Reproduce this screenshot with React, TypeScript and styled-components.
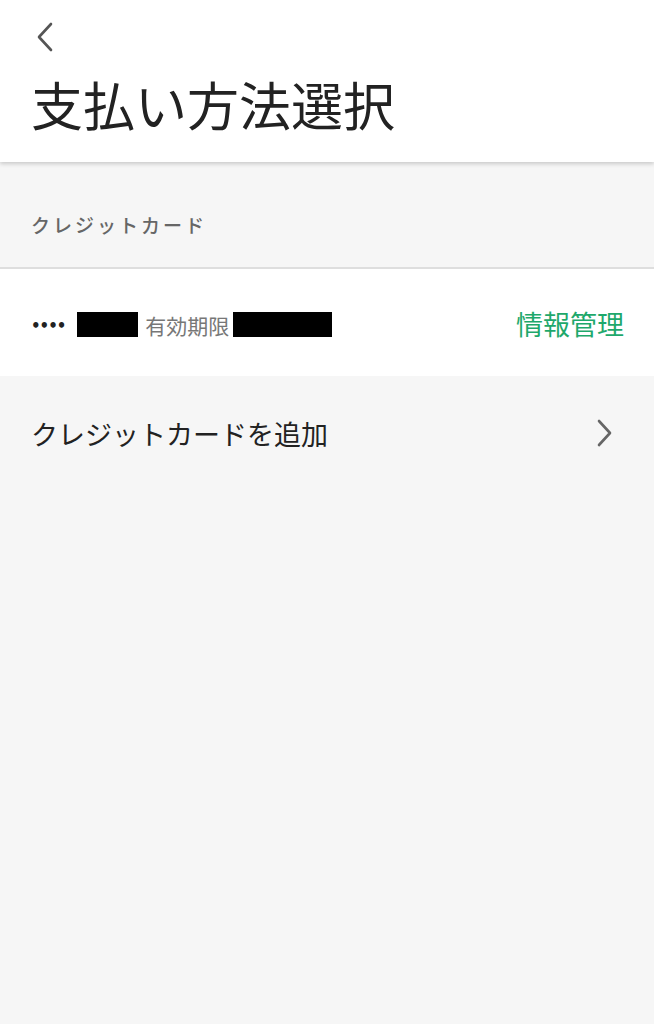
import React from 'react';
import styled, { createGlobalStyle } from 'styled-components';

const GlobalStyle = createGlobalStyle`
  html, body {
    margin: 0;
    padding: 0;
    background: #f6f6f6;
  }
  body {
    font-family: "Noto Sans CJK JP", "Noto Sans", sans-serif;
    color: #222;
  }
`;

const Page = styled.div`
  min-height: 1024px;
  background: #f6f6f6;
`;

const Header = styled.header`
  background: #fff;
  height: 162px;
  padding: 0 31px;
  box-sizing: border-box;
  box-shadow: 0 2px 4px rgba(0, 0, 0, 0.18);
  position: relative;
  z-index: 1;
  display: flex;
  flex-direction: column;
`;

const BackButton = styled.button`
  border: none;
  background: none;
  padding: 0;
  margin: 21px 0 0 5px;
  width: 18px;
  height: 32px;
  color: #555;
  display: flex;
  align-items: center;
  justify-content: center;
`;

const Title = styled.h1`
  margin: 21px 0 0;
  font-size: 52px;
  font-weight: 400;
  line-height: 60px;
  color: #222;
`;

const SectionLabel = styled.div`
  padding: 20px 31px 0;
  height: 107px;
  display: flex;
  align-items: center;
  box-sizing: border-box;
  font-size: 19px;
  font-weight: 500;
  letter-spacing: 3px;
  color: #666;
  border-bottom: 2px solid #dedede;
`;

const CardRow = styled.div`
  background: #fff;
  height: 107px;
  padding: 0 30px 0 31px;
  display: flex;
  align-items: center;
  justify-content: space-between;
`;

const CardInfo = styled.div`
  display: flex;
  align-items: center;
  margin-top: 4px;
`;

const Dots = styled.span`
  font-size: 15px;
  letter-spacing: -1px;
  color: #222;
  font-family: "DejaVu Sans", sans-serif;
  font-weight: 700;
  margin-right: 12px;
  margin-top: 2px;
`;

const Masked = styled.span<{ $w: number }>`
  display: inline-block;
  width: ${p => p.$w}px;
  height: 25px;
  background: #000;
`;

const Expiry = styled.span`
  font-size: 21px;
  color: #777;
  margin: 0 4px 0 7px;
`;

const ManageLink = styled.a`
  font-size: 27px;
  color: #1ea86b;
  text-decoration: none;
  margin-top: 2px;
`;

const AddRow = styled.div`
  height: 114px;
  padding: 0 40px 0 31px;
  display: flex;
  align-items: center;
  justify-content: space-between;
  font-size: 27px;
  color: #222;
  box-sizing: border-box;
`;

const Chevron = ({ dir }: { dir: 'left' | 'right' }) => (
  <svg width="18" height="30" viewBox="0 0 18 30" fill="none">
    <path
      d={dir === 'left' ? 'M15 2 L3 15 L15 28' : 'M3 3 L14 15 L3 27'}
      stroke={dir === 'left' ? '#555' : '#666'}
      strokeWidth="2.6"
      strokeLinecap="round"
      strokeLinejoin="round"
    />
  </svg>
);

const App = () => (
  <Page>
    <GlobalStyle />
    <Header>
      <BackButton aria-label="戻る">
        <Chevron dir="left" />
      </BackButton>
      <Title>支払い方法選択</Title>
    </Header>
    <SectionLabel>クレジットカード</SectionLabel>
    <CardRow>
      <CardInfo>
        <Dots>••••</Dots>
        <Masked $w={61} />
        <Expiry>有効期限</Expiry>
        <Masked $w={99} />
      </CardInfo>
      <ManageLink href="#">情報管理</ManageLink>
    </CardRow>
    <AddRow>
      <span>クレジットカードを追加</span>
      <Chevron dir="right" />
    </AddRow>
  </Page>
);

export default App;
